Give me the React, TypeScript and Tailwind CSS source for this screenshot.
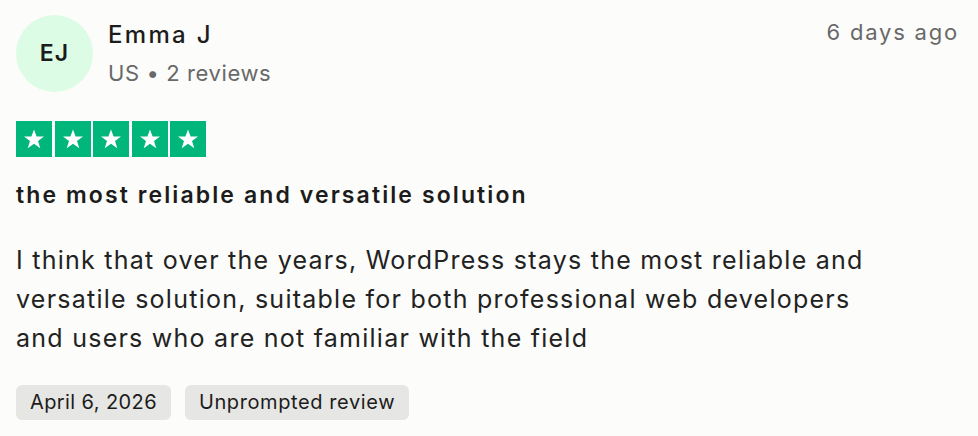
import React from "react";

const Star = () => (
  <div className="flex h-[36px] w-[36px] items-center justify-center bg-[#00b67a]">
    <svg viewBox="0 0 24 24" className="h-[24px] w-[24px]" fill="#fff">
      <path d="M12 2.5l2.6 7.1h7.4l-6 4.4 2.3 7.3L12 16.8l-6.3 4.5L8 14 2 9.6h7.4z" />
    </svg>
  </div>
);

const App = () => {
  return (
    <div className="min-h-screen w-[978px] bg-[#fcfcfa] px-[16px] pt-[15px] font-['Inter',sans-serif] text-[#1c1c1c]">
      <div className="flex items-start">
        <div className="flex h-[77px] w-[77px] items-center justify-center rounded-full bg-[#dcfce5] text-[23px] font-semibold tracking-[1px] text-[#1c1c1c]">
          EJ
        </div>
        <div className="ml-[15px] flex flex-1 flex-col">
          <div className="mt-[3px] text-[24px] font-medium leading-[34px] tracking-[2.3px]">Emma J</div>
          <div className="mt-[6px] text-[22px] leading-[30px] tracking-[0.6px] text-[#696969]">US • 2 reviews</div>
        </div>
        <div className="mt-[2px] pr-[3px] text-[22px] leading-[30px] tracking-[1.8px] text-[#696969]">6 days ago</div>
      </div>

      <div className="mt-[29px] flex gap-[2.5px]">
        <Star />
        <Star />
        <Star />
        <Star />
        <Star />
      </div>

      <h2 className="mt-[22px] text-[23px] font-semibold leading-[32px] tracking-[2.1px]">
        the most reliable and versatile solution
      </h2>

      <p className="mt-[30px] max-w-[920px] text-[25px] leading-[39px] tracking-[1.25px] text-[#222]">
        I think that over the years, WordPress stays the most reliable and
        <br />
        versatile solution, suitable for both professional web developers
        <br />
        and users who are not familiar with the field
      </p>

      <div className="mt-[27px] flex gap-[14px]">
        <span className="rounded-[6px] bg-[#e6e6e4] px-[14px] py-[3px] text-[20px] leading-[29px] tracking-[0.4px]">
          April 6, 2026
        </span>
        <span className="rounded-[6px] bg-[#e6e6e4] px-[14px] py-[3px] text-[20px] leading-[29px] tracking-[0.6px]">
          Unprompted review
        </span>
      </div>
    </div>
  );
};

export default App;
